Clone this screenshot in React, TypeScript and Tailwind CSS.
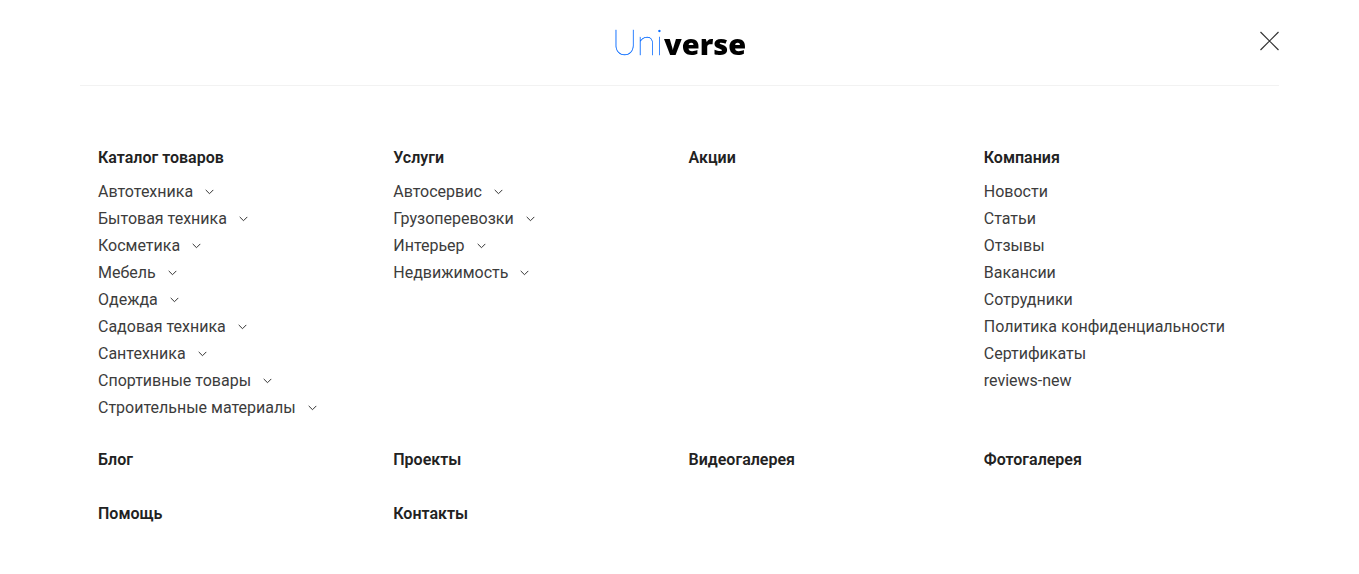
type Section = { title: string; items?: string[]; expandable?: boolean };

const sections: Section[] = [
  {
    title: "Каталог товаров",
    expandable: true,
    items: [
      "Автотехника",
      "Бытовая техника",
      "Косметика",
      "Мебель",
      "Одежда",
      "Садовая техника",
      "Сантехника",
      "Спортивные товары",
      "Строительные материалы",
    ],
  },
  {
    title: "Услуги",
    expandable: true,
    items: ["Автосервис", "Грузоперевозки", "Интерьер", "Недвижимость"],
  },
  { title: "Акции" },
  {
    title: "Компания",
    items: [
      "Новости",
      "Статьи",
      "Отзывы",
      "Вакансии",
      "Сотрудники",
      "Политика конфиденциальности",
      "Сертификаты",
      "reviews-new",
    ],
  },
  { title: "Блог" },
  { title: "Проекты" },
  { title: "Видеогалерея" },
  { title: "Фотогалерея" },
  { title: "Помощь" },
  { title: "Контакты" },
];

function Logo() {
  return (
    <svg
      width="144"
      height="52"
      viewBox="0 0 144 52"
      role="img"
      aria-label="Universe"
      className="will-change-transform"
    >
      <text
        x="4"
        y="38"
        fill="#0a6cff"
        stroke="#0a6cff"
        strokeWidth="0.3"
        className="font-['Lato',sans-serif] text-[35px] font-thin"
      >
        Uni
      </text>
      <text x="56" y="38" className="font-['Open_Sans',sans-serif] text-[29px] font-extrabold">
        verse
      </text>
    </svg>
  );
}

function Chevron() {
  return (
    <svg width="9" height="6" viewBox="0 0 9 6" fill="none" stroke="#333" aria-hidden="true">
      <path d="M0.7 0.9 4.5 4.7 8.3 0.9" />
    </svg>
  );
}

function MenuSection({ title, items, expandable }: Section) {
  return (
    <section className="px-2">
      <h2 className="text-base leading-6 font-semibold text-[#222]">
        <a href="#">{title}</a>
      </h2>
      {items && (
        <ul className="mt-3 mb-px flex flex-col gap-2">
          {items.map((item) => (
            <li key={item} className="flex items-center gap-3 leading-[19px]">
              <a href="#">{item}</a>
              {expandable && (
                <button type="button" aria-label={`Раскрыть: ${item}`} className="flex">
                  <Chevron />
                </button>
              )}
            </li>
          ))}
        </ul>
      )}
    </section>
  );
}

export default function App() {
  return (
    <div className="bg-white px-20 pb-12 font-['Roboto',sans-serif] text-base text-[#3c3c3c]">
      <header className="grid h-[86px] grid-cols-[1fr_auto_1fr] items-center border-b border-[#f2f2f2]">
        <a href="#" className="col-start-2">
          <Logo />
        </a>
        <button type="button" aria-label="Закрыть" className="mb-1 justify-self-end">
          <svg width="20" height="20" viewBox="0 0 20 20" fill="none" stroke="#333" strokeWidth="1.2">
            <path d="M1.5 1 19.5 19M19.5 1 1.5 19" />
          </svg>
        </button>
      </header>
      <nav className="grid grid-cols-4 gap-y-[30px] pt-15 pr-2 pl-[10px]">
        {sections.map((section) => (
          <MenuSection key={section.title} {...section} />
        ))}
      </nav>
    </div>
  );
}
